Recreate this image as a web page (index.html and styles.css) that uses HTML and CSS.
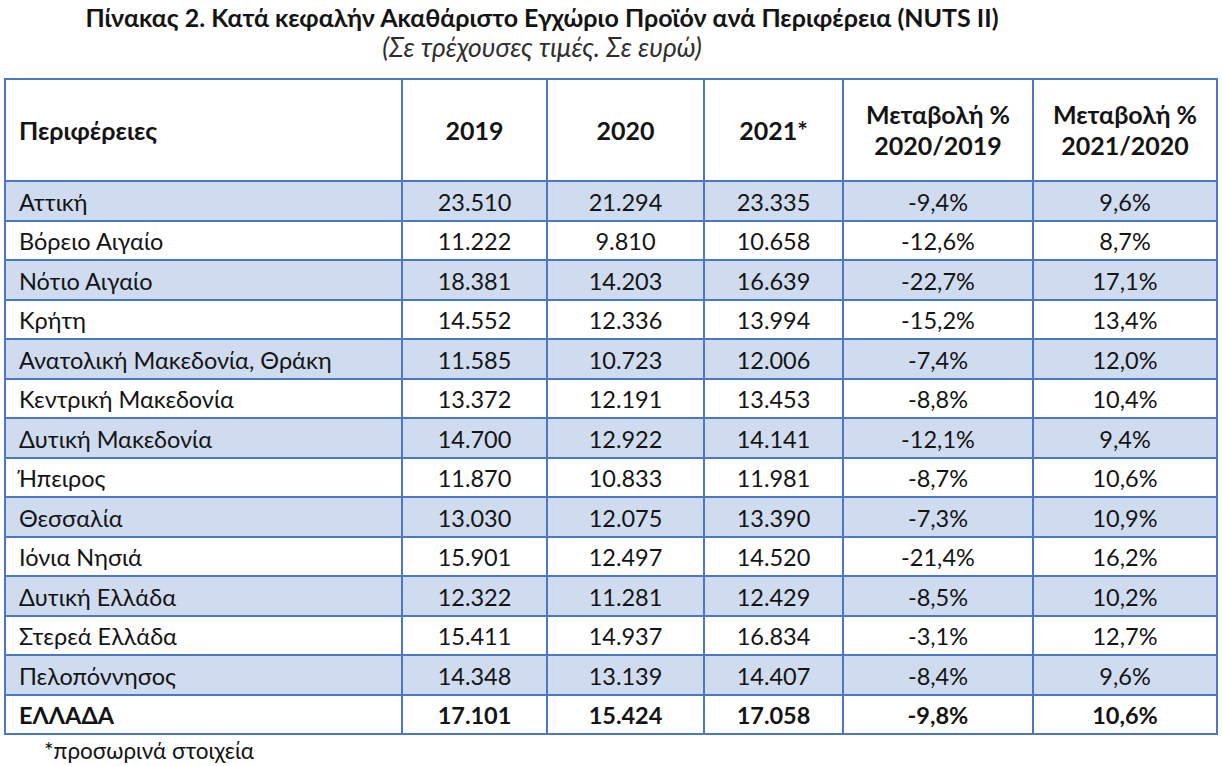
FILE: index.html
```html
<!DOCTYPE html>
<html lang="el">
<head>
<meta charset="utf-8">
<title>Πίνακας 2</title>
<link rel="stylesheet" href="styles.css">
</head>
<body>
<div class="page">
  <div class="head">
    <div class="title">Πίνακας 2. Κατά κεφαλήν Ακαθάριστο Εγχώριο Προϊόν ανά Περιφέρεια (NUTS II)</div>
    <div class="subtitle">(Σε τρέχουσες τιμές. Σε ευρώ)</div>
  </div>
  <table class="gdp">
    <colgroup>
      <col class="c1"><col class="c2"><col class="c3"><col class="c4"><col class="c5"><col class="c6">
    </colgroup>
    <thead>
      <tr>
        <th class="name">Περιφέρειες</th>
        <th>2019</th>
        <th>2020</th>
        <th>2021*</th>
        <th>Μεταβολή %<br>2020/2019</th>
        <th>Μεταβολή %<br>2021/2020</th>
      </tr>
    </thead>
    <tbody>
      <tr class="shade"><td class="name">Αττική</td><td>23.510</td><td>21.294</td><td>23.335</td><td>-9,4%</td><td>9,6%</td></tr>
      <tr><td class="name">Βόρειο Αιγαίο</td><td>11.222</td><td>9.810</td><td>10.658</td><td>-12,6%</td><td>8,7%</td></tr>
      <tr class="shade"><td class="name">Νότιο Αιγαίο</td><td>18.381</td><td>14.203</td><td>16.639</td><td>-22,7%</td><td>17,1%</td></tr>
      <tr><td class="name">Κρήτη</td><td>14.552</td><td>12.336</td><td>13.994</td><td>-15,2%</td><td>13,4%</td></tr>
      <tr class="shade"><td class="name">Ανατολική Μακεδονία, Θράκη</td><td>11.585</td><td>10.723</td><td>12.006</td><td>-7,4%</td><td>12,0%</td></tr>
      <tr><td class="name">Κεντρική Μακεδονία</td><td>13.372</td><td>12.191</td><td>13.453</td><td>-8,8%</td><td>10,4%</td></tr>
      <tr class="shade"><td class="name">Δυτική Μακεδονία</td><td>14.700</td><td>12.922</td><td>14.141</td><td>-12,1%</td><td>9,4%</td></tr>
      <tr><td class="name">Ήπειρος</td><td>11.870</td><td>10.833</td><td>11.981</td><td>-8,7%</td><td>10,6%</td></tr>
      <tr class="shade"><td class="name">Θεσσαλία</td><td>13.030</td><td>12.075</td><td>13.390</td><td>-7,3%</td><td>10,9%</td></tr>
      <tr><td class="name">Ιόνια Νησιά</td><td>15.901</td><td>12.497</td><td>14.520</td><td>-21,4%</td><td>16,2%</td></tr>
      <tr class="shade"><td class="name">Δυτική Ελλάδα</td><td>12.322</td><td>11.281</td><td>12.429</td><td>-8,5%</td><td>10,2%</td></tr>
      <tr><td class="name">Στερεά Ελλάδα</td><td>15.411</td><td>14.937</td><td>16.834</td><td>-3,1%</td><td>12,7%</td></tr>
      <tr class="shade"><td class="name">Πελοπόννησος</td><td>14.348</td><td>13.139</td><td>14.407</td><td>-8,4%</td><td>9,6%</td></tr>
      <tr class="total"><td class="name">ΕΛΛΑΔΑ</td><td>17.101</td><td>15.424</td><td>17.058</td><td>-9,8%</td><td>10,6%</td></tr>
    </tbody>
  </table>
  <div class="note">*προσωρινά στοιχεία</div>
</div>
</body>
</html>
```

FILE: styles.css
```css
html, body {
  margin: 0;
  padding: 0;
  background: #ffffff;
}

body {
  font-family: Lato, "Open Sans", "DejaVu Sans", sans-serif;
  color: #141414;
}

.page {
  width: 1222px;
}

.head {
  width: 1084px;
  text-align: center;
  padding-top: 2px;
}

.title {
  font-weight: 700;
  font-size: 25px;
  line-height: 30px;
}

.subtitle {
  font-style: italic;
  font-size: 26.5px;
  line-height: 30px;
  color: #2e2e2e;
}

.gdp {
  margin: 16px 0 0 4px;
  border-collapse: collapse;
  table-layout: fixed;
  width: 1213px;
  font-size: 23.5px;
}

.c1 { width: 397px; }
.c2 { width: 145px; }
.c3 { width: 157px; }
.c4 { width: 139px; }
.c5 { width: 190px; }
.c6 { width: 184px; }

.gdp th,
.gdp td {
  border: 2px solid #4a78c4;
  text-align: center;
  padding: 0 4px;
}

.gdp th {
  height: 100px;
  font-weight: 700;
  font-size: 25px;
  line-height: 31px;
}

.gdp td {
  height: 35.5px;
  line-height: 26px;
  padding-top: 2px;
}

.gdp .name {
  text-align: left;
  padding-left: 13px;
}

.gdp tr.shade td {
  background: #cfdbee;
}

.gdp tr.total td {
  font-weight: 700;
}

.note {
  padding-left: 44px;
  font-size: 22.5px;
  line-height: 28px;
  margin-top: 2px;
}
```
